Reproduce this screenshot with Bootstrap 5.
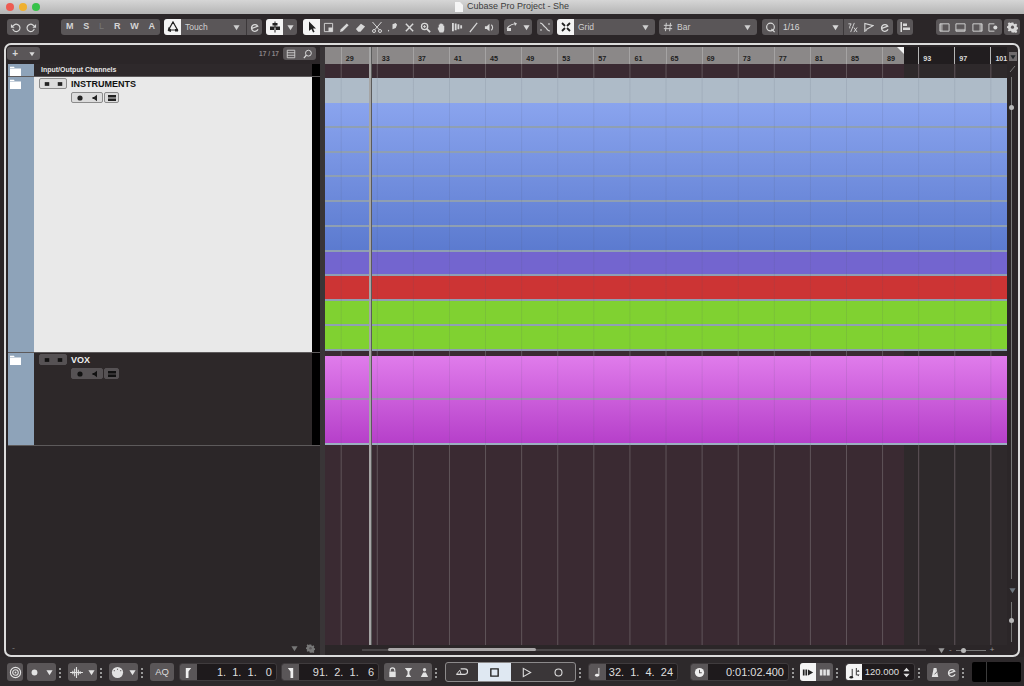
<!DOCTYPE html>
<html lang="en">
<head>
<meta charset="utf-8">
<title>Cubase Pro Project - She</title>
<link href="https://cdn.jsdelivr.net/npm/bootstrap@5.3.0/dist/css/bootstrap.min.css" rel="stylesheet">
<style>
html,body{height:100%;}
body{background:#2b2628;font-family:"Liberation Sans",Arial,sans-serif;color:#ddd;font-size:9px;overflow:hidden;}
svg{display:block;flex:none;}
.shell{height:686px;width:1024px;}
.wintitle{height:14px;background:linear-gradient(#d6d6d6,#b4b4b4);position:relative;color:#3c3c3c;font-size:9px;flex:none;}
.lights{position:absolute;left:6px;top:3px;gap:5px;}
.lamp{width:8px;height:8px;border-radius:50%;}
.lamp-r{background:#ee5b52;}.lamp-y{background:#efb02e;}.lamp-g{background:#37c24a;}
.toolrow{height:29px;padding:5px 4px 8px 7px;background:#2b2628;flex:none;}
.grp{height:16px;background:#5a5658;border-radius:3px;display:flex;align-items:center;justify-content:space-around;color:#d8d8d8;flex:none;}
.onwhite{background:#f4f4f4;color:#222;justify-content:center;border-radius:3px 0 0 3px;height:16px;width:17px;display:flex;align-items:center;flex:none;}
.seg{border-left:1px solid #3c383a;height:16px;display:flex;align-items:center;justify-content:center;flex:none;}
.ddl{height:16px;display:flex;align-items:center;padding:0 6px 0 4px;flex:1 1 auto;font-size:8.5px;color:#cfcfcf;justify-content:space-between;}
.msl{font-weight:700;font-size:9px;color:#d5d5d5;}
.dim{color:#777;font-weight:400;}
.tw-undo{width:32px;margin-right:18px;}.tw-msl{width:99px;}.tw-touch{width:98px;}.tw-snap{width:31px;margin-right:2px;}
.tw-tools{width:196px;justify-content:flex-start;margin-right:1px;}.tw-tools .tl{width:16.2px;display:flex;justify-content:center;flex:none;}
.tw-autom{width:28px;margin-right:1px;}.tw-curve{width:16px;}.tw-grid{width:98px;}.tw-bar{width:98px;margin-right:1px;}
.tw-quant{width:131px;font-size:8.5px;}.tw-align{width:16px;}.tw-win{width:66px;margin-left:19px;margin-right:-2px;}.tw-gear{width:16px;}
.tw-16{width:16px;}.tw-65{width:65px;}
.workspace{margin:0 4px;border:2px solid #dcdcdc;border-radius:7px;flex:1 1 auto;min-height:0;padding:2px 0 0 2px;background:#2b2628;}
.leftpane{width:312px;flex:none;}
.splitbar{width:5px;flex:none;background:#393537;}
.lefttop{height:17px;padding:0 4px 4px 0;}
.addbtn{width:33px;height:13px;margin-left:-1px;font-size:10px;font-weight:700;}
.cnt{color:#8b8789;font-size:6.5px;font-weight:700;margin-right:4px;}
.srchbtn{width:33px;height:13px;}
.trk{display:flex;border-bottom:1px solid #5d5a5b;}
.trk-head{height:13px;background:#2e292b;}
.trk-inst{height:276px;background:#e9e9e9;color:#111;}
.trk-vox{height:93px;background:#2d2829;color:#eee;}
.strip{width:26px;background:#8ea3b9;flex:none;padding:2px 0 0 2px;}
.trkbody{flex:1 1 auto;padding:1px 0 0 5px;}
.blackbar{width:8px;background:#000;flex:none;}
.chtitle{font-size:7px;font-weight:700;color:#e5e5e5;line-height:11px;padding-left:2px;}
.trkname{font-size:9px;font-weight:700;line-height:10px;margin-left:4px;}
.btnlite{background:#dcdcdc;border:1px solid #8b8b8b;color:#222;}
.btndark{background:#565254;border:1px solid #565254;color:#111;}
.mini{height:11px;border-radius:2px;display:flex;align-items:center;justify-content:space-around;flex:none;}
.m-ms{width:28px;}.m-rec{width:32px;}.m-ed{width:15px;}
.under{margin:3px 0 0 32px;}
.leftrest{flex:1 1 auto;}
.leftfoot{height:10px;padding:0 5px 3px 4px;color:#777;}
.tlpane{width:682px;flex:none;position:relative;}
.rulerbar{height:17px;display:flex;padding-left:15.7px;background:linear-gradient(90deg,#8b8888 579px,#211d1f 579px);position:relative;}
.rcell{width:36.1px;flex:none;border-left:1px solid #a5a3a3;font-size:7.2px;font-weight:700;color:#1d1d1d;padding:7px 0 0 4px;line-height:9px;}
.rcell-d{color:#ddd;border-left-color:#b5b5b5;}
.flagmark{position:absolute;left:572px;top:0;width:0;height:0;border-top:7px solid #f2f2f2;border-left:7px solid transparent;}
.tickbg{background-image:linear-gradient(90deg,#5f5459 1px,transparent 1px),linear-gradient(90deg,#3a2a32 579px,#2e292b 579px);background-size:36.1px 100%,100% 100%;background-position:15.7px 0,0 0;}
.lanetop{height:14px;}
.rowbase{height:24.75px;border-bottom:2px solid #8f9fb2;}
.rw-grey{height:25px;background:#aebbc8;}
.bluestack{background:linear-gradient(#8aa4ee,#5b7acf);}
.rw-purple{background:#7365cf;}
.rw-red{background:#cc3434;}
.rw-green{background:#80d131;}
.laneGap{height:5px;}
.pinkstack{background:linear-gradient(#e07ceb,#b53ec9);}
.rw-p1{height:44.5px;border-bottom:2px solid #9f8eb2;}
.rw-p2{height:45px;border-bottom:2px solid #9cb0c0;}
.lanegrow{flex:1 1 auto;}
.gridover{position:absolute;left:0;right:0;top:31px;height:367px;background-image:linear-gradient(90deg,rgba(70,80,100,.12) 1px,transparent 1px);background-size:36.1px 100%;background-position:15.7px 0;}
.playline{position:absolute;left:44px;top:0;bottom:10px;width:2px;background:#a5a5a5;box-shadow:1px 0 0 #5b5b5b;}
.hscroll{height:10px;padding-left:37px;background:#2b2628;}
.htrack{width:564px;height:2px;background:#4b4749;position:relative;}
.hthumb{position:absolute;left:26px;top:-1px;width:148px;height:3px;border-radius:2px;background:#a9a6a7;}
.hzoom{margin-left:12px;color:#9a9a9a;font-size:8px;width:66px;}
.hzline{width:30px;height:1px;background:#777;position:relative;}
.zknob{position:absolute;width:5px;height:5px;border-radius:50%;background:#b8b8b8;}
.hzline .zknob{left:5px;top:-2px;}
.rightcol{width:11px;flex:none;padding:5px 0 13px 2px;}
.rtop{width:8px;height:9px;background:#6f6b6d;display:flex;align-items:center;justify-content:center;}
.vline{width:1px;background:#777;position:relative;flex:1 1 auto;margin-left:2px;}
.vknob{position:absolute;left:-2px;width:5px;height:5px;border-radius:50%;background:#b8b8b8;}
.vk1{top:28px;}
.vzline{height:40px;flex:none;}
.vk2{top:16px;}
.transport{height:29px;padding:6px 4px 4px 7px;background:#2d292b;flex:none;}
.tgrp{height:18px;background:#5a5658;border-radius:3px;display:flex;align-items:center;justify-content:space-around;flex:none;color:#e3e3e3;}
.gripdots{width:2px;margin:0 3px;flex:none;align-self:center;color:#999;}
.t16{width:16px;}.t29{width:29px;}.t24{width:24px;font-size:9.5px;color:#ddd;}
.t48{width:48px;}.t32{width:32px;}.t33{width:33px;}
.fieldwrap{display:flex;height:18px;flex:none;border-radius:3px;overflow:hidden;background:#1e1a1c;border:1px solid #3f3b3d;}
.ficon{width:17px;background:#5a5658;display:flex;align-items:center;justify-content:center;flex:none;color:#eee;}
.fval{font-size:11px;color:#dedede;white-space:pre;text-align:right;padding-right:4px;line-height:16px;flex:1 1 auto;}
.f98{width:98px;}.f90{width:90px;}.f99{width:99px;}.f70{width:70px;}
.fval-t{font-size:9.5px;padding-right:0;}
.tbox{width:131px;height:20px;border:1px solid #8c8a8b;border-radius:3px;margin-top:-1px;display:flex;flex:none;background:#3a3638;color:#ddd;}
.tbox .tb{width:32.25px;display:flex;align-items:center;justify-content:center;flex:none;}
.tbox .tb-on{background:#dfe8f2;color:#222;}
.t-w{background:#f4f4f4;color:#222;width:16px;height:18px;display:flex;align-items:center;justify-content:center;border-radius:3px 0 0 3px;flex:none;}
.blackbox{width:49px;height:20px;margin-top:-1px;margin-left:5px;background:#000;border-radius:2px;padding-left:14px;flex:none;}
.blackline{width:1px;height:100%;background:#3b3b3b;}
.m-gap1{margin-left:1px;}.m-gap3{margin-left:3px;}.m-gap4{margin-left:4px;}.m-gap5{margin-left:5px;}.m-gap12{margin-left:12px;}
</style>
</head>
<body>
<svg width="0" height="0" class="position-absolute">
<defs>
<symbol id="tri" viewBox="0 0 8 8"><path d="M0.5 1.5h7L4 7z" fill="currentColor"/></symbol>
<symbol id="undo" viewBox="0 0 12 12"><path d="M3 7.5a4 4 0 1 0 1.5-4.3L3 4.5" fill="none" stroke="currentColor" stroke-width="1.3"/><path d="M1 2.2v4h4z" fill="currentColor"/></symbol>
<symbol id="redo" viewBox="0 0 12 12"><path d="M9 7.5a4 4 0 1 1-1.5-4.3L9 4.5" fill="none" stroke="currentColor" stroke-width="1.3"/><path d="M11 2.2v4H7z" fill="currentColor"/></symbol>
<symbol id="e" viewBox="0 0 12 12"><path d="M2.5 7.2 9.6 4.6A3.7 3.7 0 1 0 9.8 8" fill="none" stroke="currentColor" stroke-width="1.4"/></symbol>
<symbol id="folder" viewBox="0 0 11 10"><path d="M0 2V.8h4l.6 1.2zM0 2.6h11V10H0z" fill="#fff"/></symbol>
<symbol id="auto" viewBox="0 0 12 12"><path d="M6 1 10.5 9H1.5z" fill="none" stroke="currentColor" stroke-width="1.2"/><path d="M4 8.5 1.5 6 1 10l3 1zM6 .5 7.5 3h-3zM8 8h3v2.5H8z" fill="currentColor"/></symbol>
<symbol id="snap" viewBox="0 0 12 12"><path d="M6 .5v11M1 6h10" stroke="currentColor" stroke-width="1"/><path d="M3.5 2h5v2.5h-5zM1 6h4v3H1zM7 6h4v3H7z" fill="currentColor"/></symbol>
<symbol id="arrow" viewBox="0 0 12 12"><path d="M3 .5v9.5l2.4-2 1.7 3.5 1.5-.7L7 7.5h3z" fill="currentColor"/></symbol>
<symbol id="range" viewBox="0 0 12 12"><path d="M1.5 1.5h9v9h-9z" fill="none" stroke="currentColor"/><path d="M6 6h4.5v4.5H6z" fill="currentColor"/></symbol>
<symbol id="pencil" viewBox="0 0 12 12"><path d="M1 11l1-3 6.5-6.5 2 2L4 10z" fill="currentColor"/></symbol>
<symbol id="eraser" viewBox="0 0 12 12"><path d="M1 7.5 6.5 2 11 5 6 10.5H3.5z" fill="currentColor"/></symbol>
<symbol id="scissors" viewBox="0 0 12 12"><circle cx="3" cy="10" r="1.5" fill="none" stroke="currentColor"/><circle cx="9" cy="10" r="1.5" fill="none" stroke="currentColor"/><path d="M1.5 1 8.3 8.8M10.5 1 3.7 8.8" stroke="currentColor"/></symbol>
<symbol id="glue" viewBox="0 0 12 12"><path d="M6 2.5 9.5 1 11 3 9.5 6.5 6 8zM1.5 11 1 8.5 2.5 9z" fill="currentColor"/></symbol>
<symbol id="cross" viewBox="0 0 12 12"><path d="M2 2l8 8M10 2l-8 8" stroke="currentColor" stroke-width="1.6"/></symbol>
<symbol id="zoom" viewBox="0 0 12 12"><circle cx="5" cy="5" r="3.4" fill="none" stroke="currentColor" stroke-width="1.4"/><path d="M7.5 7.5 11 11" stroke="currentColor" stroke-width="2"/><path d="M5 3.3v3.4M3.3 5h3.4" stroke="currentColor"/></symbol>
<symbol id="hand" viewBox="0 0 12 12"><path d="M3 6V3h1V2h1v-.5h1V2h1v.5h1V4h1v5l-1 2.5H4L2 7.5V6z" fill="currentColor"/></symbol>
<symbol id="bars" viewBox="0 0 14 12"><path d="M1 1h2v9H1zM4 1.5h2v7.5H4zM7 2.5h2V8H7zM10 3.500h2V7h-2z" fill="currentColor"/></symbol>
<symbol id="line" viewBox="0 0 12 12"><path d="M2 11 10 1" stroke="currentColor" stroke-width="1.4"/></symbol>
<symbol id="speaker" viewBox="0 0 12 12"><path d="M1 4.500h2L6 2v8L3 7.500H1z" fill="currentColor"/><path d="M8 3a4 4 0 0 1 0 6" fill="none" stroke="currentColor" stroke-width="1.2"/></symbol>
<symbol id="autotool" viewBox="0 0 12 12"><path d="M1 7.500c2-3 5-4.500 9-5" fill="none" stroke="currentColor" stroke-width="1.2"/><path d="M8 1l3 1.500L9 5z M1 7h4v3H1z" fill="currentColor"/></symbol>
<symbol id="curve" viewBox="0 0 12 12"><path d="M1 2c3 0 3 3 5 4s2 4 5 4" fill="none" stroke="currentColor" stroke-width="1.2"/><path d="M1 9h2M9 3h2" stroke="currentColor"/></symbol>
<symbol id="gridi" viewBox="0 0 12 12"><path d="M2 2l3 3M10 2 7 5M2 10l3-3M10 10 7 7" stroke="currentColor" stroke-width="1.8"/></symbol>
<symbol id="hash" viewBox="0 0 12 12"><path d="M4 1 3 11M9 1 8 11M1 4h10M1 8h10" stroke="currentColor" stroke-width="1.2"/></symbol>
<symbol id="q" viewBox="0 0 12 12"><circle cx="6" cy="5.500" r="4.200" fill="none" stroke="currentColor" stroke-width="1.300"/><path d="M7 7.500 10.500 11" stroke="currentColor" stroke-width="1.300"/></symbol>
<symbol id="triplet" viewBox="0 0 12 12"><path d="M1.500 2h3L3 5v2M8 1 4 11" fill="none" stroke="currentColor"/><path d="M7.500 6l3.500 5M11 6l-3.500 5" stroke="currentColor"/></symbol>
<symbol id="flagq" viewBox="0 0 12 12"><path d="M2 11V1.500L11 4 4 8" fill="none" stroke="currentColor" stroke-width="1.200"/><path d="M2 9l2-2v3z" fill="currentColor"/></symbol>
<symbol id="alignl" viewBox="0 0 12 12"><path d="M1.500 1h1.500v10H1.500zM4 2.500h4v2.500H4zM4 6.500h7V9H4z" fill="currentColor"/></symbol>
<symbol id="w1" viewBox="0 0 12 12"><path d="M1 2h10v8H1z" fill="none" stroke="currentColor"/><path d="M1 2h3v8H1z" fill="currentColor" opacity=".5"/></symbol>
<symbol id="w2" viewBox="0 0 12 12"><path d="M1 2h10v8H1z" fill="none" stroke="currentColor"/><path d="M1 7.500h10V10H1z" fill="currentColor" opacity=".5"/></symbol>
<symbol id="w3" viewBox="0 0 12 12"><path d="M1 2h10v8H1z" fill="none" stroke="currentColor"/><path d="M8 2h3v8H8z" fill="currentColor" opacity=".5"/></symbol>
<symbol id="w4" viewBox="0 0 12 12"><path d="M7 10H1V2h6" fill="none" stroke="currentColor"/><circle cx="8" cy="6" r="2.200" fill="currentColor"/></symbol>
<symbol id="gear" viewBox="0 0 12 12"><path d="M5 .5h2l.3 1.500 1.200.5 1.300-.8 1.400 1.400-.8 1.300.5 1.200 1.500.3v2l-1.500.3-.5 1.200.8 1.300-1.400 1.400-1.300-.8-1.200.5L7 11.500H5l-.3-1.500-1.200-.5-1.300.8L.8 9.400l.8-1.300-.5-1.200L-.4 6.600v-2l1.500-.3.5-1.200-.8-1.300L2.200.4l1.300.8L4.700.7z" fill="currentColor"/><circle cx="6" cy="5.600" r="1.700" fill="#5a5658"/></symbol>
<symbol id="list" viewBox="0 0 12 12"><path d="M1.500 1.500h9v9h-9z" fill="none" stroke="currentColor"/><path d="M1.500 4.500h9M1.500 7.500h9" stroke="currentColor"/></symbol>
<symbol id="mag" viewBox="0 0 12 12"><circle cx="6.500" cy="5" r="3.500" fill="none" stroke="currentColor" stroke-width="1.200"/><path d="M4 7.500 1 11" stroke="currentColor" stroke-width="1.500"/></symbol>
<symbol id="dotrec" viewBox="0 0 8 8"><circle cx="4" cy="4" r="2.600" fill="currentColor"/></symbol>
<symbol id="mon" viewBox="0 0 8 8"><path d="M1.500 3h1.500L6 .8v6.400L3 5H1.500z" fill="currentColor"/></symbol>
<symbol id="edit" viewBox="0 0 10 8"><path d="M1 1h8v2.500H1zM1 4.500h8V7H1z" fill="currentColor"/></symbol>
<symbol id="mbox" viewBox="0 0 8 8"><path d="M1 1.500h6v5H1z" fill="currentColor"/></symbol>
<symbol id="gripd" viewBox="0 0 2 12"><path d="M0 1h2v2H0zM0 5h2v2H0zM0 9h2v2H0z" fill="currentColor"/></symbol>
<symbol id="sync" viewBox="0 0 14 14"><circle cx="7" cy="7" r="5.500" fill="none" stroke="currentColor" stroke-width="1.200"/><circle cx="7" cy="7" r="3" fill="none" stroke="currentColor" stroke-width="1.200"/><circle cx="7" cy="7" r="1" fill="currentColor"/></symbol>
<symbol id="wave" viewBox="0 0 14 12"><path d="M0 6h14M3 4v4M5 2v8M7 0v12M9 3v6M11 4.500v3" stroke="currentColor" stroke-width="1.200"/></symbol>
<symbol id="knob" viewBox="0 0 14 14"><circle cx="7" cy="7" r="6" fill="currentColor"/><path d="M3 5h1M7 3v1M10 5h1" stroke="#5a5658" stroke-width="1.200"/></symbol>
<symbol id="locl" viewBox="0 0 10 12"><path d="M2 1h6L5 5v7H2z" fill="currentColor"/></symbol>
<symbol id="locr" viewBox="0 0 10 12"><path d="M8 1H2l3 4v7h3z" fill="currentColor"/></symbol>
<symbol id="lock" viewBox="0 0 12 12"><path d="M3.500 5V3.500a2.500 2.500 0 0 1 5 0V5" fill="none" stroke="currentColor" stroke-width="1.200"/><path d="M2.500 5h7v6h-7z" fill="currentColor"/></symbol>
<symbol id="punchi" viewBox="0 0 12 12"><path d="M2 1h8L7 5v3l2 3H3l2-3V5z" fill="currentColor"/></symbol>
<symbol id="punch2" viewBox="0 0 12 12"><circle cx="6" cy="3" r="1.800" fill="currentColor"/><path d="M2 11l2.500-5h3L10 11z" fill="currentColor"/></symbol>
<symbol id="cycle" viewBox="0 0 16 12"><path d="M6 2h4.500a3 3 0 0 1 0 6H1.500" fill="none" stroke="currentColor" stroke-width="1.200"/><path d="M1.500 8 5 3.500 6.500 8z" fill="none" stroke="currentColor"/></symbol>
<symbol id="stopi" viewBox="0 0 12 12"><path d="M2 2h8v8H2z" fill="none" stroke="currentColor" stroke-width="1.500"/></symbol>
<symbol id="playi" viewBox="0 0 12 12"><path d="M2.500 1.500 10.500 6l-8 4.500z" fill="none" stroke="currentColor" stroke-width="1.200"/></symbol>
<symbol id="reci" viewBox="0 0 12 12"><circle cx="6" cy="6" r="3.800" fill="none" stroke="currentColor" stroke-width="1.200"/></symbol>
<symbol id="note" viewBox="0 0 12 12"><path d="M7.500 1v8" stroke="currentColor"/><ellipse cx="5.500" cy="9" rx="2.200" ry="1.600" fill="currentColor"/></symbol>
<symbol id="clock" viewBox="0 0 12 12"><circle cx="6" cy="6" r="5" fill="currentColor"/><path d="M6 3v3.300h2.500" fill="none" stroke="#5a5658" stroke-width="1.100"/></symbol>
<symbol id="playb" viewBox="0 0 14 12"><path d="M1 2.500h2v7H1zM4 2.500h2v7H4zM7 2.500l6 3.500-6 3.500z" fill="currentColor"/></symbol>
<symbol id="blocks" viewBox="0 0 14 12"><path d="M1 2.500h3v7H1zM5 2.500h3v7H5zM9 2.500h3.500v7H9z" fill="currentColor"/></symbol>
<symbol id="tempo" viewBox="0 0 12 14"><path d="M3.500 2v9M8 1v8" stroke="currentColor"/><ellipse cx="2.500" cy="11" rx="2" ry="1.400" fill="currentColor"/><path d="M10 3l1.500 2h-3zM10 10l1.500-2h-3z" fill="currentColor"/></symbol>
<symbol id="updown" viewBox="0 0 8 12"><path d="M4 .5 7.500 4.500h-7zM4 11.500.5 7.500h7z" fill="currentColor"/></symbol>
<symbol id="metro" viewBox="0 0 12 12"><path d="M4 1h3l2 10H2z" fill="currentColor"/><path d="M5 8 10.500 2" stroke="#5a5658"/></symbol>
</defs>
</svg>

<div class="shell d-flex flex-column">
  <header class="wintitle d-flex align-items-center justify-content-center">
    <div class="lights d-flex"><span class="lamp lamp-r"></span><span class="lamp lamp-y"></span><span class="lamp lamp-g"></span></div>
    <svg width="8" height="10" viewBox="0 0 8 10" class="me-1"><path d="M0 0h5l3 3v7H0z" fill="#f5f5f5"/></svg>
    <span>Cubase Pro Project - She</span>
  </header>

  <nav class="toolrow d-flex gap-1">
    <div class="grp tw-undo"><svg width="11" height="11"><use href="#undo"/></svg><svg width="11" height="11"><use href="#redo"/></svg></div>
    <div class="grp tw-msl msl"><span>M</span><span>S</span><span class="dim">L</span><span>R</span><span>W</span><span>A</span></div>
    <div class="grp tw-touch"><div class="onwhite"><svg width="12" height="12"><use href="#auto"/></svg></div><div class="ddl"><span>Touch</span><svg width="7" height="7"><use href="#tri"/></svg></div><div class="seg tw-16"><svg width="11" height="11"><use href="#e"/></svg></div></div>
    <div class="grp tw-snap"><div class="onwhite"><svg width="12" height="12"><use href="#snap"/></svg></div><div class="flex-grow-1 d-flex justify-content-center"><svg width="7" height="7"><use href="#tri"/></svg></div></div>
    <div class="grp tw-tools">
      <div class="onwhite"><svg width="12" height="12"><use href="#arrow"/></svg></div>
      <span class="tl"><svg width="11" height="11"><use href="#range"/></svg></span><span class="tl"><svg width="11" height="11"><use href="#pencil"/></svg></span><span class="tl"><svg width="11" height="11"><use href="#eraser"/></svg></span><span class="tl"><svg width="12" height="12"><use href="#scissors"/></svg></span><span class="tl"><svg width="11" height="11"><use href="#glue"/></svg></span><span class="tl"><svg width="11" height="11"><use href="#cross"/></svg></span><span class="tl"><svg width="11" height="11"><use href="#zoom"/></svg></span><span class="tl"><svg width="11" height="11"><use href="#hand"/></svg></span><span class="tl"><svg width="13" height="11"><use href="#bars"/></svg></span><span class="tl"><svg width="11" height="11"><use href="#line"/></svg></span><span class="tl"><svg width="11" height="11"><use href="#speaker"/></svg></span>
    </div>
    <div class="grp tw-autom"><svg width="12" height="12"><use href="#autotool"/></svg><svg width="7" height="7"><use href="#tri"/></svg></div>
    <div class="grp tw-curve"><svg width="12" height="12"><use href="#curve"/></svg></div>
    <div class="grp tw-grid"><div class="onwhite"><svg width="12" height="12"><use href="#gridi"/></svg></div><div class="ddl"><span>Grid</span><svg width="7" height="7"><use href="#tri"/></svg></div></div>
    <div class="grp tw-bar"><div class="ddl"><span class="d-flex align-items-center gap-1"><svg width="10" height="10"><use href="#hash"/></svg>Bar</span><svg width="7" height="7"><use href="#tri"/></svg></div></div>
    <div class="grp tw-quant"><span class="tw-16 d-flex justify-content-center"><svg width="11" height="11"><use href="#q"/></svg></span><div class="seg tw-65 justify-content-between px-1"><span>1/16</span><svg width="7" height="7"><use href="#tri"/></svg></div><div class="seg flex-grow-1 justify-content-around"><svg width="11" height="11"><use href="#triplet"/></svg><svg width="11" height="11"><use href="#flagq"/></svg><svg width="11" height="11"><use href="#e"/></svg></div></div>
    <div class="grp tw-align"><svg width="12" height="12"><use href="#alignl"/></svg></div>
    <div class="grp tw-win"><svg width="11" height="11"><use href="#w1"/></svg><svg width="11" height="11"><use href="#w2"/></svg><svg width="11" height="11"><use href="#w3"/></svg><svg width="11" height="11"><use href="#w4"/></svg></div>
    <div class="grp tw-gear"><svg width="11" height="11"><use href="#gear"/></svg></div>
  </nav>

  <main class="workspace d-flex">
    <section class="leftpane d-flex flex-column">
      <div class="lefttop d-flex align-items-center">
        <div class="grp addbtn"><span>+</span><svg width="6" height="6"><use href="#tri"/></svg></div>
        <span class="cnt ms-auto">17 / 17</span>
        <div class="grp srchbtn"><svg width="10" height="10"><use href="#list"/></svg><svg width="10" height="10"><use href="#mag"/></svg></div>
      </div>
      <div class="trk trk-head">
        <div class="strip"><svg width="11" height="10"><use href="#folder"/></svg></div>
        <div class="trkbody py-0"><div class="chtitle">Input/Output Channels</div></div>
        <div class="blackbar"></div>
      </div>
      <div class="trk trk-inst">
        <div class="strip"><svg width="11" height="10"><use href="#folder"/></svg></div>
        <div class="trkbody">
          <div class="d-flex align-items-center"><div class="mini m-ms btnlite"><svg width="6" height="6"><use href="#mbox"/></svg><svg width="6" height="6"><use href="#mbox"/></svg></div><span class="trkname">INSTRUMENTS</span></div>
          <div class="d-flex gap-0 under"><div class="mini m-rec btnlite"><svg width="8" height="8"><use href="#dotrec"/></svg><svg width="8" height="8"><use href="#mon"/></svg></div><div class="mini m-ed btnlite m-gap1"><svg width="10" height="8"><use href="#edit"/></svg></div></div>
        </div>
        <div class="blackbar"></div>
      </div>
      <div class="trk trk-vox">
        <div class="strip"><svg width="11" height="10"><use href="#folder"/></svg></div>
        <div class="trkbody">
          <div class="d-flex align-items-center"><div class="mini m-ms btndark"><svg width="6" height="6"><use href="#mbox"/></svg><svg width="6" height="6"><use href="#mbox"/></svg></div><span class="trkname">VOX</span></div>
          <div class="d-flex gap-0 under"><div class="mini m-rec btndark"><svg width="8" height="8"><use href="#dotrec"/></svg><svg width="8" height="8"><use href="#mon"/></svg></div><div class="mini m-ed btndark m-gap1"><svg width="10" height="8"><use href="#edit"/></svg></div></div>
        </div>
        <div class="blackbar"></div>
      </div>
      <div class="leftrest"></div>
      <div class="leftfoot d-flex align-items-center gap-2">
        <span>-</span><svg width="7" height="7" class="ms-auto"><use href="#tri"/></svg><svg width="9" height="9"><use href="#gear"/></svg>
      </div>
    </section>
    <div class="splitbar"></div>
    <section class="tlpane d-flex flex-column">
      <div class="rulerbar">
        <span class="rcell">29</span><span class="rcell">33</span><span class="rcell">37</span><span class="rcell">41</span><span class="rcell">45</span><span class="rcell">49</span><span class="rcell">53</span><span class="rcell">57</span><span class="rcell">61</span><span class="rcell">65</span><span class="rcell">69</span><span class="rcell">73</span><span class="rcell">77</span><span class="rcell">81</span><span class="rcell">85</span><span class="rcell">89</span><span class="rcell rcell-d">93</span><span class="rcell rcell-d">97</span><span class="rcell rcell-d">101</span>
        <span class="flagmark"></span>
      </div>
      <div class="lanetop tickbg"></div>
      <div class="rowbase rw-grey border-0"></div>
      <div class="bluestack">
        <div class="rowbase"></div><div class="rowbase"></div><div class="rowbase"></div><div class="rowbase"></div><div class="rowbase"></div><div class="rowbase"></div>
      </div>
      <div class="rowbase rw-purple"></div>
      <div class="rowbase rw-red"></div>
      <div class="rowbase rw-green"></div>
      <div class="rowbase rw-green"></div>
      <div class="laneGap tickbg"></div>
      <div class="pinkstack">
        <div class="rw-p1"></div><div class="rw-p2"></div>
      </div>
      <div class="lanegrow tickbg"></div>
      <div class="hscroll d-flex align-items-center">
        <div class="htrack"><div class="hthumb"></div></div>
        <div class="hzoom d-flex align-items-center gap-1"><svg width="7" height="7"><use href="#tri"/></svg><span>-</span><div class="hzline"><span class="zknob"></span></div><span>+</span></div>
      </div>
      <div class="gridover"></div>
      <div class="playline"></div>
    </section>
    <aside class="rightcol d-flex flex-column">
      <div class="rtop"><svg width="6" height="6" class="text-dark"><use href="#tri"/></svg></div>
      <svg width="7" height="8" viewBox="0 0 7 8" class="my-1"><path d="M1 7 6 1" stroke="#777"/></svg>
      <div class="vline"><span class="vknob vk1"></span></div>
      <svg width="7" height="7" class="my-2 text-secondary"><use href="#tri"/></svg>
      <div class="vline vzline"><span class="vknob vk2"></span></div>
    </aside>
  </main>

  <footer class="transport d-flex">
    <div class="tgrp t16"><svg width="13" height="13"><use href="#sync"/></svg></div>
    <div class="tgrp t29 m-gap4"><svg width="9" height="9"><use href="#dotrec"/></svg><svg width="7" height="7"><use href="#tri"/></svg></div>
    <svg class="gripdots" width="2" height="12"><use href="#gripd"/></svg>
    <div class="tgrp t29 m-gap4"><svg width="13" height="11"><use href="#wave"/></svg><svg width="7" height="7"><use href="#tri"/></svg></div>
    <svg class="gripdots" width="2" height="12"><use href="#gripd"/></svg>
    <div class="tgrp t29 m-gap4"><svg width="13" height="13"><use href="#knob"/></svg><svg width="7" height="7"><use href="#tri"/></svg></div>
    <svg class="gripdots" width="2" height="12"><use href="#gripd"/></svg>
    <div class="tgrp t24 m-gap4">AQ</div>
    <div class="fieldwrap f98 m-gap5"><div class="ficon"><svg width="9" height="11"><use href="#locl"/></svg></div><div class="fval">1.  1.  1.   0</div></div>
    <div class="fieldwrap f98 m-gap4"><div class="ficon"><svg width="9" height="11"><use href="#locr"/></svg></div><div class="fval">91.  2.  1.   6</div></div>
    <div class="tgrp t48 m-gap5"><svg width="11" height="11"><use href="#lock"/></svg><svg width="11" height="11"><use href="#punchi"/></svg><svg width="11" height="11"><use href="#punch2"/></svg></div>
    <svg class="gripdots" width="2" height="12"><use href="#gripd"/></svg>
    <div class="tbox m-gap5"><span class="tb"><svg width="15" height="11"><use href="#cycle"/></svg></span><span class="tb tb-on"><svg width="11" height="11"><use href="#stopi"/></svg></span><span class="tb"><svg width="11" height="11"><use href="#playi"/></svg></span><span class="tb"><svg width="11" height="11"><use href="#reci"/></svg></span></div>
    <svg class="gripdots" width="2" height="12"><use href="#gripd"/></svg>
    <div class="fieldwrap f90 m-gap4"><div class="ficon"><svg width="11" height="11"><use href="#note"/></svg></div><div class="fval">32.  1.  4.  24</div></div>
    <div class="fieldwrap f99 m-gap12"><div class="ficon"><svg width="11" height="11"><use href="#clock"/></svg></div><div class="fval">0:01:02.400</div></div>
    <svg class="gripdots" width="2" height="12"><use href="#gripd"/></svg>
    <div class="tgrp t33 m-gap3 justify-content-start"><span class="t-w"><svg width="12" height="11"><use href="#playb"/></svg></span><span class="flex-grow-1 d-flex justify-content-center"><svg width="12" height="11"><use href="#blocks"/></svg></span></div>
    <svg class="gripdots" width="2" height="12"><use href="#gripd"/></svg>
    <div class="fieldwrap f70 m-gap4"><span class="t-w"><svg width="11" height="13"><use href="#tempo"/></svg></span><div class="fval fval-t d-flex align-items-center justify-content-end gap-1 pe-1">120.000<svg width="7" height="11"><use href="#updown"/></svg></div></div>
    <svg class="gripdots" width="2" height="12"><use href="#gripd"/></svg>
    <div class="tgrp t32 m-gap4"><svg width="11" height="11"><use href="#metro"/></svg><svg width="11" height="11"><use href="#e"/></svg></div>
    <svg class="gripdots" width="2" height="12"><use href="#gripd"/></svg>
    <div class="blackbox"><div class="blackline"></div></div>
  </footer>
</div>
<script src="https://cdn.jsdelivr.net/npm/bootstrap@5.3.0/dist/js/bootstrap.bundle.min.js"></script>
</body>
</html>
